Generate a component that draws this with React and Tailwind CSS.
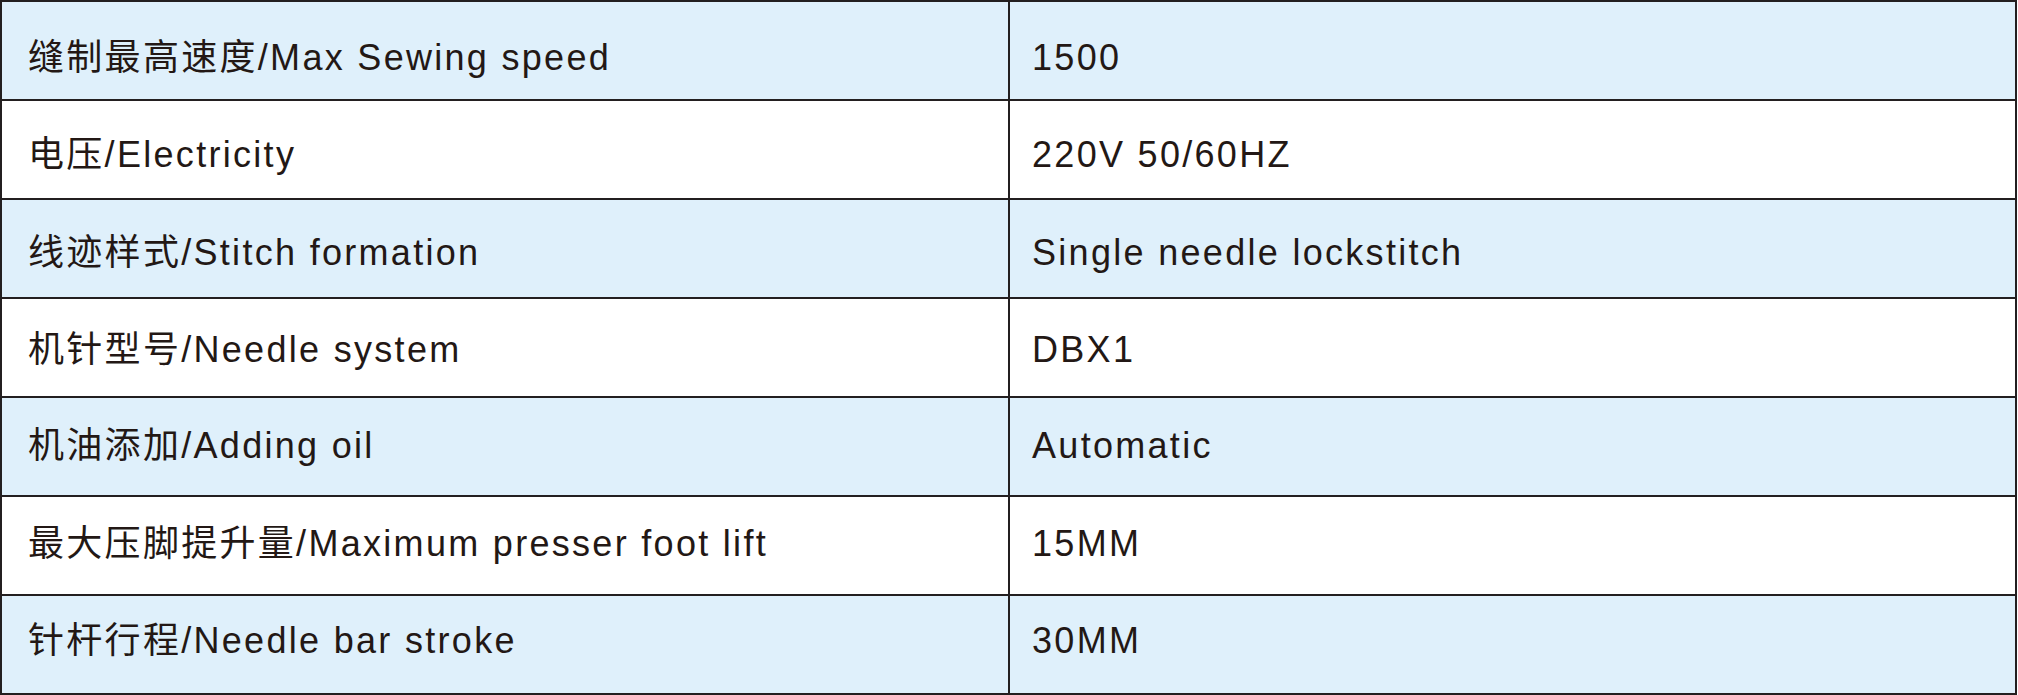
import React from "react";

const rows = [
  ["缝制最高速度/Max Sewing speed", "1500", "pt-[14px]"],
  ["电压/Electricity", "220V 50/60HZ", "pt-[11px]"],
  ["线迹样式/Stitch formation", "Single needle lockstitch", "pt-[8px]"],
  ["机针型号/Needle system", "DBX1", "pt-[4px]"],
  ["机油添加/Adding oil", "Automatic", "pb-[1px]"],
  ["最大压脚提升量/Maximum presser foot lift", "15MM", "pb-[4px]"],
  ["针杆行程/Needle bar stroke", "30MM", "pb-[7px]"],
];

export default function App() {
  return (
    <div className="w-[2018px] h-[695px] bg-white">
      <div
        className="w-[2017px] flex flex-col border-t-2 border-l-2 border-[#231f20] text-[#231815] text-[36px] tracking-[2.3px]"
        style={{ fontFamily: '"Liberation Sans", "Noto Sans CJK SC", sans-serif' }}
      >
        {rows.map(([k, v, pad], i) => (
          <div
            key={i}
            className={`flex h-[99px] border-b-2 border-[#231f20] ${i % 2 === 0 ? "bg-[#dff0fb]" : "bg-white"}`}
          >
            <div className={`w-[1008px] shrink-0 border-r-2 border-[#231f20] flex items-center pl-[26px] whitespace-nowrap ${pad}`}>
              {k}
            </div>
            <div className={`flex-1 border-r-2 border-[#231f20] flex items-center pl-[22px] whitespace-nowrap ${pad}`}>
              {v}
            </div>
          </div>
        ))}
      </div>
    </div>
  );
}
